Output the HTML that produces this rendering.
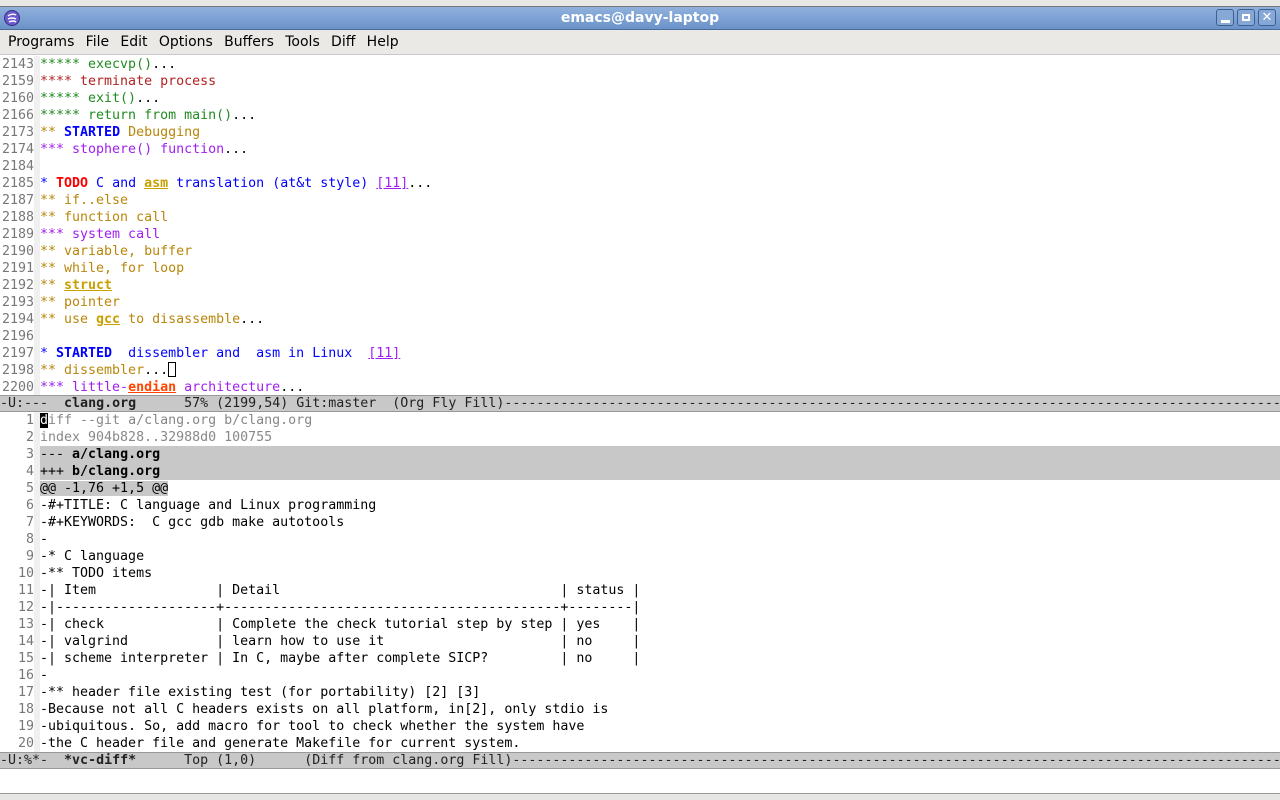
<!DOCTYPE html>
<html><head><meta charset="utf-8"><style>
*{margin:0;padding:0;box-sizing:border-box}
body{width:1280px;height:800px;overflow:hidden;background:#fff;font-family:"DejaVu Sans Mono","Liberation Mono",monospace;font-size:13.3px;position:relative}
#top{position:absolute;left:0;top:0;width:1280px;height:7px;background:#e8e8e6;border-bottom:1px solid #777}
#title{position:absolute;left:0;top:7px;width:1280px;height:23px;background:linear-gradient(#8fb1dc,#6b93c9);border-bottom:1px solid #4a6a9a;color:#fff;font:bold 14px "DejaVu Sans","Liberation Sans",sans-serif;text-align:center;line-height:22px}
#menu{position:absolute;left:0;top:30px;width:1280px;height:25px;background:#ebe9e6;border-bottom:1px solid #c8c8c8;font:14px "DejaVu Sans","Liberation Sans",sans-serif;line-height:24px;padding-left:8px;word-spacing:0}
#menu span{margin-right:11.3px}
.pane{position:absolute;left:0;width:1280px}
.l{height:17px;line-height:17px;white-space:pre;position:relative}
.n{display:inline-block;width:34px;text-align:right;color:#777;background:#fff}
.f{display:inline-block;width:6px;height:17px;background:#f0f0f0;vertical-align:top}
.mode{position:absolute;left:0;width:1280px;height:17px;line-height:16px;background:#c8c8c8;border-top:1px solid #999;border-bottom:1px solid #999;white-space:pre;overflow:hidden;color:#222}
.g{color:#228b22}.r{color:#b22222}.o{color:#b8860b}.p{color:#a020f0}.b{color:#0000ff}
.B{font-weight:bold}.u{text-decoration:underline}
.gray{color:#888}
.hl{background:#c8c8c8;display:inline-block;width:1240px}
.hl2{background:#c8c8c8}
</style></head><body>
<div id="top"></div>
<div id="title"><svg style="position:absolute;left:4px;top:3px" width="16" height="16"><circle cx="8" cy="8" r="7.5" fill="#6a5acd" stroke="#3b2f80"/><path d="M4 6 Q8 3 12 5 M4 9 Q8 7 12 9 M5 12 Q9 10 12 12" stroke="#fff" stroke-width="1.4" fill="none"/></svg>emacs@davy-laptop
<div style="position:absolute;right:4px;top:2px;display:flex;gap:3px">
<div style="width:18px;height:17px;border:1px solid #3e5f8f;border-radius:3px;background:#86a8d6;position:relative"><div style="position:absolute;left:4px;top:10px;width:9px;height:3px;background:#fff"></div></div>
<div style="width:18px;height:17px;border:1px solid #3e5f8f;border-radius:3px;background:#86a8d6;position:relative"><div style="position:absolute;left:4px;top:4px;width:8px;height:7px;border:2px solid #fff"></div></div>
<div style="width:18px;height:17px;border:1px solid #3e5f8f;border-radius:3px;background:#86a8d6;color:#fff;font-size:13px;line-height:15px;text-align:center">✕</div>
</div></div>
<div id="menu"><span>Programs</span><span>File</span><span>Edit</span><span>Options</span><span>Buffers</span><span>Tools</span><span>Diff</span><span>Help</span></div>

<div class="pane" style="top:56px">
<div class="l"><span class="n">2143</span><span class="f"></span><span class="g">***** execvp()</span>...</div>
<div class="l"><span class="n">2159</span><span class="f"></span><span class="r">**** terminate process</span></div>
<div class="l"><span class="n">2160</span><span class="f"></span><span class="g">***** exit()</span>...</div>
<div class="l"><span class="n">2166</span><span class="f"></span><span class="g">***** return from main()</span>...</div>
<div class="l"><span class="n">2173</span><span class="f"></span><span class="o">** <span class="b B">STARTED</span> Debugging</span></div>
<div class="l"><span class="n">2174</span><span class="f"></span><span class="p">*** stophere() function</span>...</div>
<div class="l"><span class="n">2184</span><span class="f"></span></div>
<div class="l"><span class="n">2185</span><span class="f"></span><span class="b">* <span class="B" style="color:#f00">TODO</span> C and <span class="o B u" style="color:#c8a000">asm</span> translation (at&amp;t style) <span class="p u">[11]</span></span>...</div>
<div class="l"><span class="n">2187</span><span class="f"></span><span class="o">** if..else</span></div>
<div class="l"><span class="n">2188</span><span class="f"></span><span class="o">** function call</span></div>
<div class="l"><span class="n">2189</span><span class="f"></span><span class="p">*** system call</span></div>
<div class="l"><span class="n">2190</span><span class="f"></span><span class="o">** variable, buffer</span></div>
<div class="l"><span class="n">2191</span><span class="f"></span><span class="o">** while, for loop</span></div>
<div class="l"><span class="n">2192</span><span class="f"></span><span class="o">** <span class="B u" style="color:#c8a000">struct</span></span></div>
<div class="l"><span class="n">2193</span><span class="f"></span><span class="o">** pointer</span></div>
<div class="l"><span class="n">2194</span><span class="f"></span><span class="o">** use <span class="B u" style="color:#c8a000">gcc</span> to disassemble</span>...</div>
<div class="l"><span class="n">2196</span><span class="f"></span></div>
<div class="l"><span class="n">2197</span><span class="f"></span><span class="b">* <span class="B">STARTED</span>  dissembler and  asm in Linux  <span class="p u">[11]</span></span></div>
<div class="l"><span class="n">2198</span><span class="f"></span><span class="o">** dissembler</span>...<span style="display:inline-block;width:8px;height:15px;border:1px solid #000;vertical-align:-3px"></span></div>
<div class="l"><span class="n">2200</span><span class="f"></span><span class="p">*** little-<span class="B u" style="color:#ff4500">endian</span> architecture</span>...</div>
</div>
<div class="mode" style="top:395px">-U:---  <b>clang.org</b>      57% (2199,54) Git:master  (Org Fly Fill)--------------------------------------------------------------------------------------------------</div>

<div class="pane" style="top:412px">
<div class="l"><span class="n">1</span><span class="f"></span><span class="gray"><span style="background:#000;color:#fff">d</span>iff --git a/clang.org b/clang.org</span></div>
<div class="l"><span class="n">2</span><span class="f"></span><span class="gray">index 904b828..32988d0 100755</span></div>
<div class="l"><span class="n">3</span><span class="f"></span><span class="hl">--- <b>a/clang.org</b></span></div>
<div class="l"><span class="n">4</span><span class="f"></span><span class="hl">+++ <b>b/clang.org</b></span></div>
<div class="l"><span class="n">5</span><span class="f"></span><span class="hl2">@@ -1,76 +1,5 @@</span></div>
<div class="l"><span class="n">6</span><span class="f"></span>-#+TITLE: C language and Linux programming</div>
<div class="l"><span class="n">7</span><span class="f"></span>-#+KEYWORDS:  C gcc gdb make autotools</div>
<div class="l"><span class="n">8</span><span class="f"></span>-</div>
<div class="l"><span class="n">9</span><span class="f"></span>-* C language</div>
<div class="l"><span class="n">10</span><span class="f"></span>-** TODO items</div>
<div class="l"><span class="n">11</span><span class="f"></span>-| Item               | Detail                                   | status |</div>
<div class="l"><span class="n">12</span><span class="f"></span>-|--------------------+------------------------------------------+--------|</div>
<div class="l"><span class="n">13</span><span class="f"></span>-| check              | Complete the check tutorial step by step | yes    |</div>
<div class="l"><span class="n">14</span><span class="f"></span>-| valgrind           | learn how to use it                      | no     |</div>
<div class="l"><span class="n">15</span><span class="f"></span>-| scheme interpreter | In C, maybe after complete SICP?         | no     |</div>
<div class="l"><span class="n">16</span><span class="f"></span>-</div>
<div class="l"><span class="n">17</span><span class="f"></span>-** header file existing test (for portability) [2] [3]</div>
<div class="l"><span class="n">18</span><span class="f"></span>-Because not all C headers exists on all platform, in[2], only stdio is</div>
<div class="l"><span class="n">19</span><span class="f"></span>-ubiquitous. So, add macro for tool to check whether the system have</div>
<div class="l"><span class="n">20</span><span class="f"></span>-the C header file and generate Makefile for current system.</div>
</div>
<div class="mode" style="top:752px">-U:%*-  <b>*vc-diff*</b>      Top (1,0)      (Diff from clang.org Fill)--------------------------------------------------------------------------------------------------</div>
<div style="position:absolute;left:0;top:793px;width:1280px;height:7px;background:#e6e6e4;border-top:1px solid #999"></div>
</body></html>
